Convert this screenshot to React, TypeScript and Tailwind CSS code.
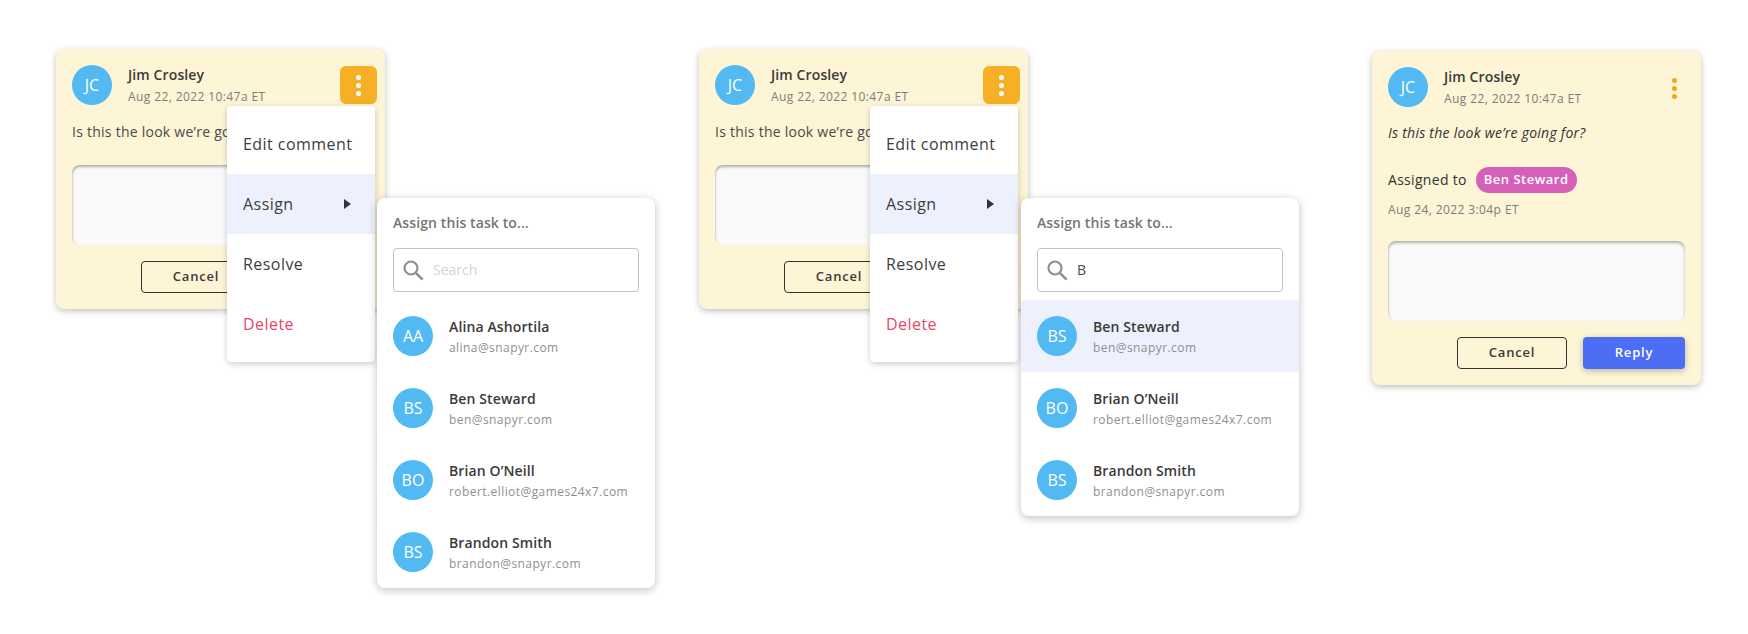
import type { ReactNode } from "react";

const people = {
  alina: { initials: "AA", name: "Alina Ashortila", email: "alina@snapyr.com" },
  ben: { initials: "BS", name: "Ben Steward", email: "ben@snapyr.com" },
  brian: { initials: "BO", name: "Brian O’Neill", email: "robert.elliot@games24x7.com" },
  brandon: { initials: "BS", name: "Brandon Smith", email: "brandon@snapyr.com" },
};

type Person = (typeof people)["alina"];

function Avatar({ initials }: { initials: string }) {
  return (
    <div className="flex size-10 shrink-0 items-center justify-center rounded-full bg-[#52b9f2] text-base font-medium text-white">
      {initials}
    </div>
  );
}

function Dots({ className }: { className: string }) {
  return (
    <div className="flex flex-col items-center gap-[3px]">
      <span className={`size-[5px] rounded-full ${className}`} />
      <span className={`size-[5px] rounded-full ${className}`} />
      <span className={`size-[5px] rounded-full ${className}`} />
    </div>
  );
}

function SearchIcon() {
  return (
    <svg width="21" height="21" viewBox="0 0 21 21" fill="none" stroke="#8f8f8f" className="shrink-0">
      <circle cx="8" cy="8" r="6.5" strokeWidth="2.2" />
      <path d="M12.8 12.8 L19.6 19.6" strokeWidth="2.6" />
    </svg>
  );
}

function Header({ open }: { open: boolean }) {
  return (
    <div className="flex items-start justify-between">
      <div className="flex gap-4">
        <Avatar initials="JC" />
        <div>
          <div className="text-sm leading-[19px] font-semibold tracking-[0.12px] text-[#3a3a3a]">Jim Crosley</div>
          <div className="mt-[5px] text-xs leading-[16px] tracking-[0.4px] text-[#7d7d7d]">
            Aug 22, 2022 10:47a ET
          </div>
        </div>
      </div>
      {open ? (
        <div className="-mr-2 mt-px flex h-[38px] w-[37px] items-center justify-center rounded-md bg-[#f5b025]">
          <Dots className="bg-white" />
        </div>
      ) : (
        <div className="mr-2 mt-[11px] flex">
          <Dots className="bg-[#f5a623]" />
        </div>
      )}
    </div>
  );
}

function ReplyBox() {
  return (
    <div className="h-20 rounded-lg bg-[#fafafa] shadow-[inset_0_2px_3px_rgba(0,0,0,0.3),inset_1px_0_1px_rgba(0,0,0,0.04)]" />
  );
}

function Actions() {
  return (
    <div className="mt-4 flex justify-end gap-4">
      <button className="h-8 w-[110px] rounded border border-[#333333] text-[13px] font-semibold tracking-[0.8px] text-[#3a3a3a]">
        Cancel
      </button>
      <button className="h-8 w-[102px] rounded bg-[#4c6ef5] text-[13px] font-semibold tracking-[0.8px] text-white shadow-[0_2px_6px_rgba(0,0,0,0.25)]">
        Reply
      </button>
    </div>
  );
}

function Menu() {
  return (
    <div className="absolute left-[171px] top-[57px] z-10 w-[148px] rounded bg-white py-2 text-base tracking-[0.45px] text-[#3d3d3d] shadow-[0_2px_6px_rgba(0,0,0,0.2)]">
      <div className="flex h-[60px] items-center pl-4">Edit comment</div>
      <div className="flex h-[60px] items-center justify-between bg-[#edf1fd] pl-4 pr-6">
        Assign
        <svg width="7" height="10" viewBox="0 0 7 10" fill="#333333">
          <path d="M0 0 L7 5 L0 10 Z" />
        </svg>
      </div>
      <div className="flex h-[60px] items-center pl-4">Resolve</div>
      <div className="flex h-[60px] items-center pl-4 text-[#e8476a]">Delete</div>
    </div>
  );
}

function PersonRow({ person, active }: { person: Person; active?: boolean }) {
  return (
    <div className={`flex h-[72px] items-center gap-4 px-4 ${active ? "bg-[#edf1fd]" : ""}`}>
      <Avatar initials={person.initials} />
      <div>
        <div className="text-sm leading-[19px] font-semibold tracking-[0.12px] text-[#3a3a3a]">{person.name}</div>
        <div className="mt-1 text-xs leading-[16px] tracking-[0.43px] text-[#8f8f8f]">{person.email}</div>
      </div>
    </div>
  );
}

function AssignPanel({ query, list, activeFirst, className }: { query?: string; list: Person[]; activeFirst?: boolean; className: string }) {
  return (
    <div className={`absolute top-[149px] z-20 w-[278px] rounded-lg bg-white shadow-[0_2px_8px_rgba(0,0,0,0.25)] ${className}`}>
      <div className="px-4 pb-4 pt-[15px] text-sm leading-[19px] font-semibold tracking-[0.1px] text-[#757575]">
        Assign this task to...
      </div>
      <div className="mx-4 mb-2 flex h-11 items-center gap-[9px] rounded border border-[#c2c2c2] pl-[9px]">
        <SearchIcon />
        {query ? (
          <span className="text-sm text-[#4a4a4a]">{query}</span>
        ) : (
          <span className="text-sm text-[#d4d4d4]">Search</span>
        )}
      </div>
      {list.map((person, i) => (
        <PersonRow key={person.email} person={person} active={activeFirst && i === 0} />
      ))}
    </div>
  );
}

function OpenCard({ children, className }: { children: ReactNode; className?: string }) {
  return (
    <div className={`relative h-[260px] w-[329px] shrink-0 rounded-lg bg-[#fef4d6] px-4 pt-4 shadow-[0_2px_6px_rgba(0,0,0,0.25)] ${className ?? ""}`}>
      <Header open />
      <p className="mt-[17px] whitespace-nowrap text-sm leading-[20px] tracking-[0.25px] text-[#4a4a4a]">
        Is this the look we’re going for?
      </p>
      <div className="mt-[23px]">
        <ReplyBox />
      </div>
      <Actions />
      <Menu />
      {children}
    </div>
  );
}

export default function App() {
  return (
    <div
      className="flex h-[634px] w-[1748px] items-start overflow-hidden bg-white pl-14 pt-[49px]"
      style={{ fontFamily: '"Open Sans", sans-serif' }}
    >
      <OpenCard>
        <AssignPanel className="left-[321px]" list={[people.alina, people.ben, people.brian, people.brandon]} />
      </OpenCard>
      <OpenCard className="ml-[314px]">
        <AssignPanel className="left-[322px]" query="B" list={[people.ben, people.brian, people.brandon]} activeFirst />
      </OpenCard>
      <div className="ml-[344px] mt-0.5 w-[329px] shrink-0 rounded-lg bg-[#fef4d6] p-4 shadow-[0_2px_6px_rgba(0,0,0,0.25)]">
        <Header open={false} />
        <p className="mt-4 text-sm leading-[20px] tracking-[0.25px] text-[#333333] italic">
          Is this the look we’re going for?
        </p>
        <div className="mt-[24px] flex items-center gap-[9px]">
          <span className="text-sm tracking-[0.3px] text-[#333333]">Assigned to</span>
          <span className="flex h-[26px] items-center rounded-full bg-[#d660b8] px-2 text-[13px] font-semibold tracking-[0.5px] text-white">
            Ben Steward
          </span>
        </div>
        <div className="mt-[9px] text-xs leading-[16px] tracking-[0.4px] text-[#7d7d7d]">Aug 24, 2022 3:04p ET</div>
        <div className="mt-[23px]">
          <ReplyBox />
        </div>
        <Actions />
      </div>
    </div>
  );
}
